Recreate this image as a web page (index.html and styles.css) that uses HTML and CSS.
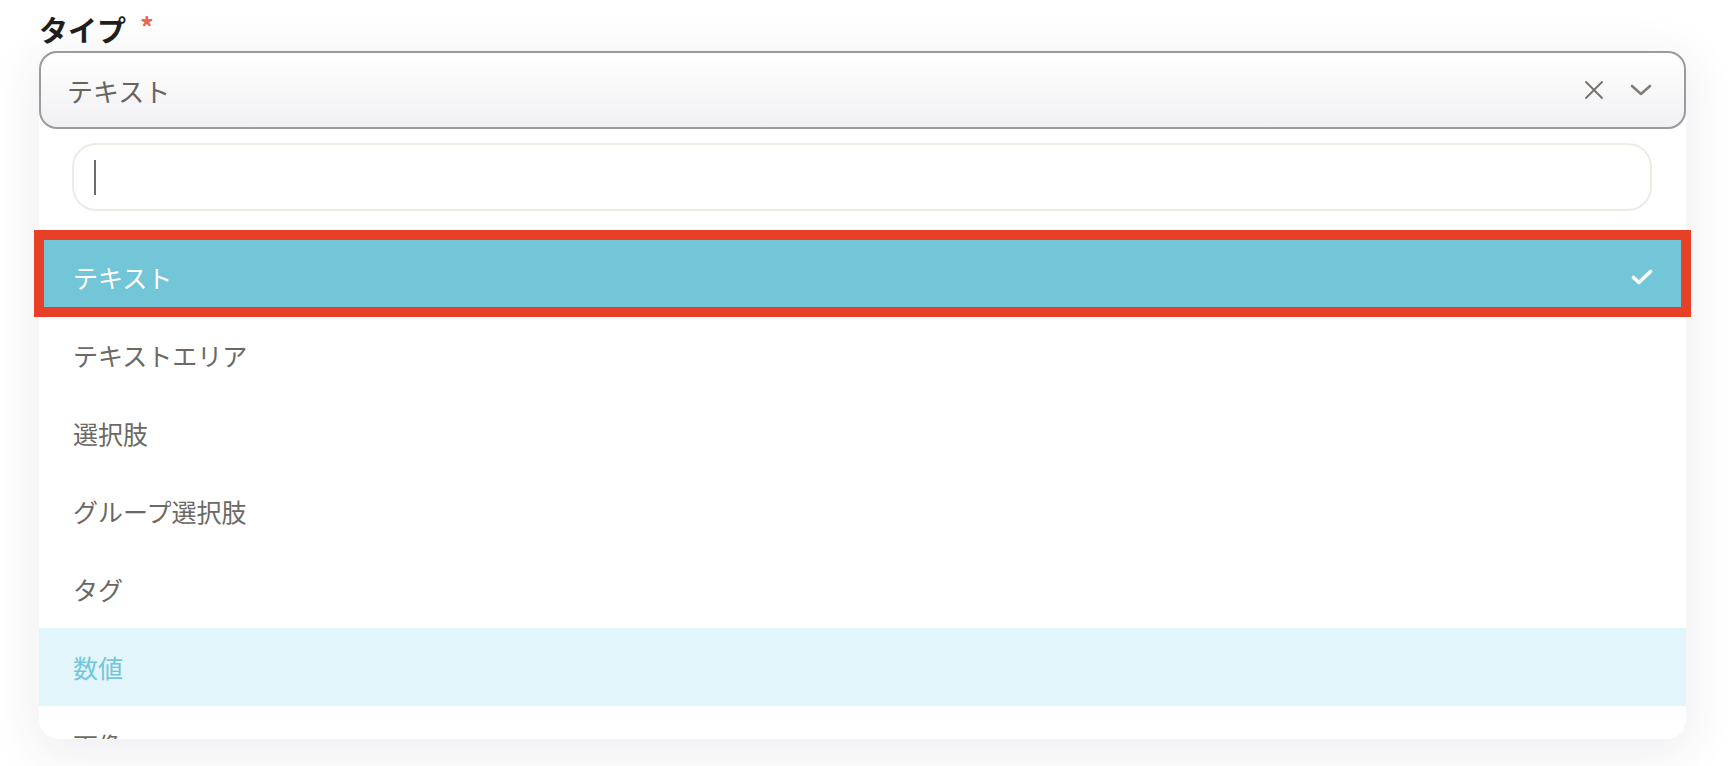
FILE: index.html
```html
<!DOCTYPE html>
<html lang="ja">
<head>
<meta charset="utf-8">
<title>タイプ</title>
<link rel="stylesheet" href="styles.css">
</head>
<body>
<div class="field">
  <div class="label">タイプ<span class="req">*</span></div>
  <div class="combo">
    <div class="select">
      <span class="value">テキスト</span>
      <span class="icons">
        <svg class="ic-x" width="20" height="20" viewBox="0 0 20 20"><path d="M2 2 L18 18 M18 2 L2 18" stroke="#737068" stroke-width="1.8" fill="none" stroke-linecap="round"/></svg>
        <svg class="ic-chev" width="22" height="12" viewBox="0 0 22 12"><path d="M2 2 L11 10 L20 2" stroke="#857d73" stroke-width="2.6" fill="none" stroke-linecap="round" stroke-linejoin="round"/></svg>
      </span>
    </div>
    <div class="panel">
      <div class="search"><span class="caret"></span></div>
      <ul class="list">
        <li class="opt selected"><span>テキスト</span>
          <svg width="22" height="16" viewBox="0 0 22 16"><path d="M2.5 8.5 L8 13.5 L19.5 2.5" stroke="#fff" stroke-width="3.6" fill="none" stroke-linecap="round" stroke-linejoin="round"/></svg>
        </li>
        <li class="opt">テキストエリア</li>
        <li class="opt">選択肢</li>
        <li class="opt">グループ選択肢</li>
        <li class="opt">タグ</li>
        <li class="opt hover">数値</li>
        <li class="opt">画像</li>
      </ul>
      <div class="mark"></div>
    </div>
  </div>
</div>
</body>
</html>
```
FILE: styles.css
```css
html, body {
  margin: 0;
  padding: 0;
  background: #ffffff;
}
body {
  width: 1736px;
  height: 766px;
  overflow: hidden;
  font-family: "Noto Sans CJK JP", "Noto Sans", sans-serif;
}
.field {
  padding: 7px 50px 0 39px;
}
.label {
  font-size: 29px;
  font-weight: 700;
  color: #1e1e1e;
  line-height: 42px;
  height: 44px;
  display: flex;
  align-items: center;
}
.req {
  color: #e8664e;
  font-size: 27px;
  font-weight: 700;
  margin-left: 14px;
  position: relative;
  top: -2px;
}
.combo {
  box-shadow: 0 10px 46px 6px rgba(55, 55, 90, 0.08);
  border-radius: 18px 18px 20px 20px;
}
.select {
  height: 78px;
  box-sizing: border-box;
  border: 2px solid #9c9b9b;
  border-radius: 18px;
  background: linear-gradient(#ffffff, #f1f1f4);
  display: flex;
  align-items: center;
  justify-content: space-between;
  padding: 0 32px 0 26px;
}
.value {
  font-size: 26px;
  color: #67635e;
}
.icons {
  display: flex;
  align-items: center;
  gap: 26px;
}
.panel {
  position: relative;
  height: 610px;
  background: #ffffff;
  border-radius: 0 0 20px 20px;
  padding: 14px 34px 0 33px;
  box-sizing: border-box;
}
.search {
  height: 68px;
  box-sizing: border-box;
  border: 2px solid #eeebe5;
  border-radius: 24px;
  display: flex;
  align-items: center;
  padding-left: 20px;
}
.caret {
  width: 2px;
  height: 35px;
  background: #6d6a66;
}
.list {
  list-style: none;
  margin: 27px -34px 0 -33px;
  padding: 0;
  height: 501px;
  overflow: hidden;
  border-radius: 0 0 20px 20px;
}
.opt {
  height: 78px;
  display: flex;
  align-items: center;
  justify-content: space-between;
  padding: 0 33px 0 34px;
  font-size: 25px;
  color: #6c6863;
}
.opt.selected {
  background: #73c5d8;
  color: #ffffff;
}
.opt.hover {
  background: #e1f5fb;
  color: #73c6da;
}
.mark {
  position: absolute;
  top: 101px;
  left: -5px;
  right: -5px;
  height: 87px;
  box-sizing: border-box;
  border: 10px solid #e84026;
}
```
